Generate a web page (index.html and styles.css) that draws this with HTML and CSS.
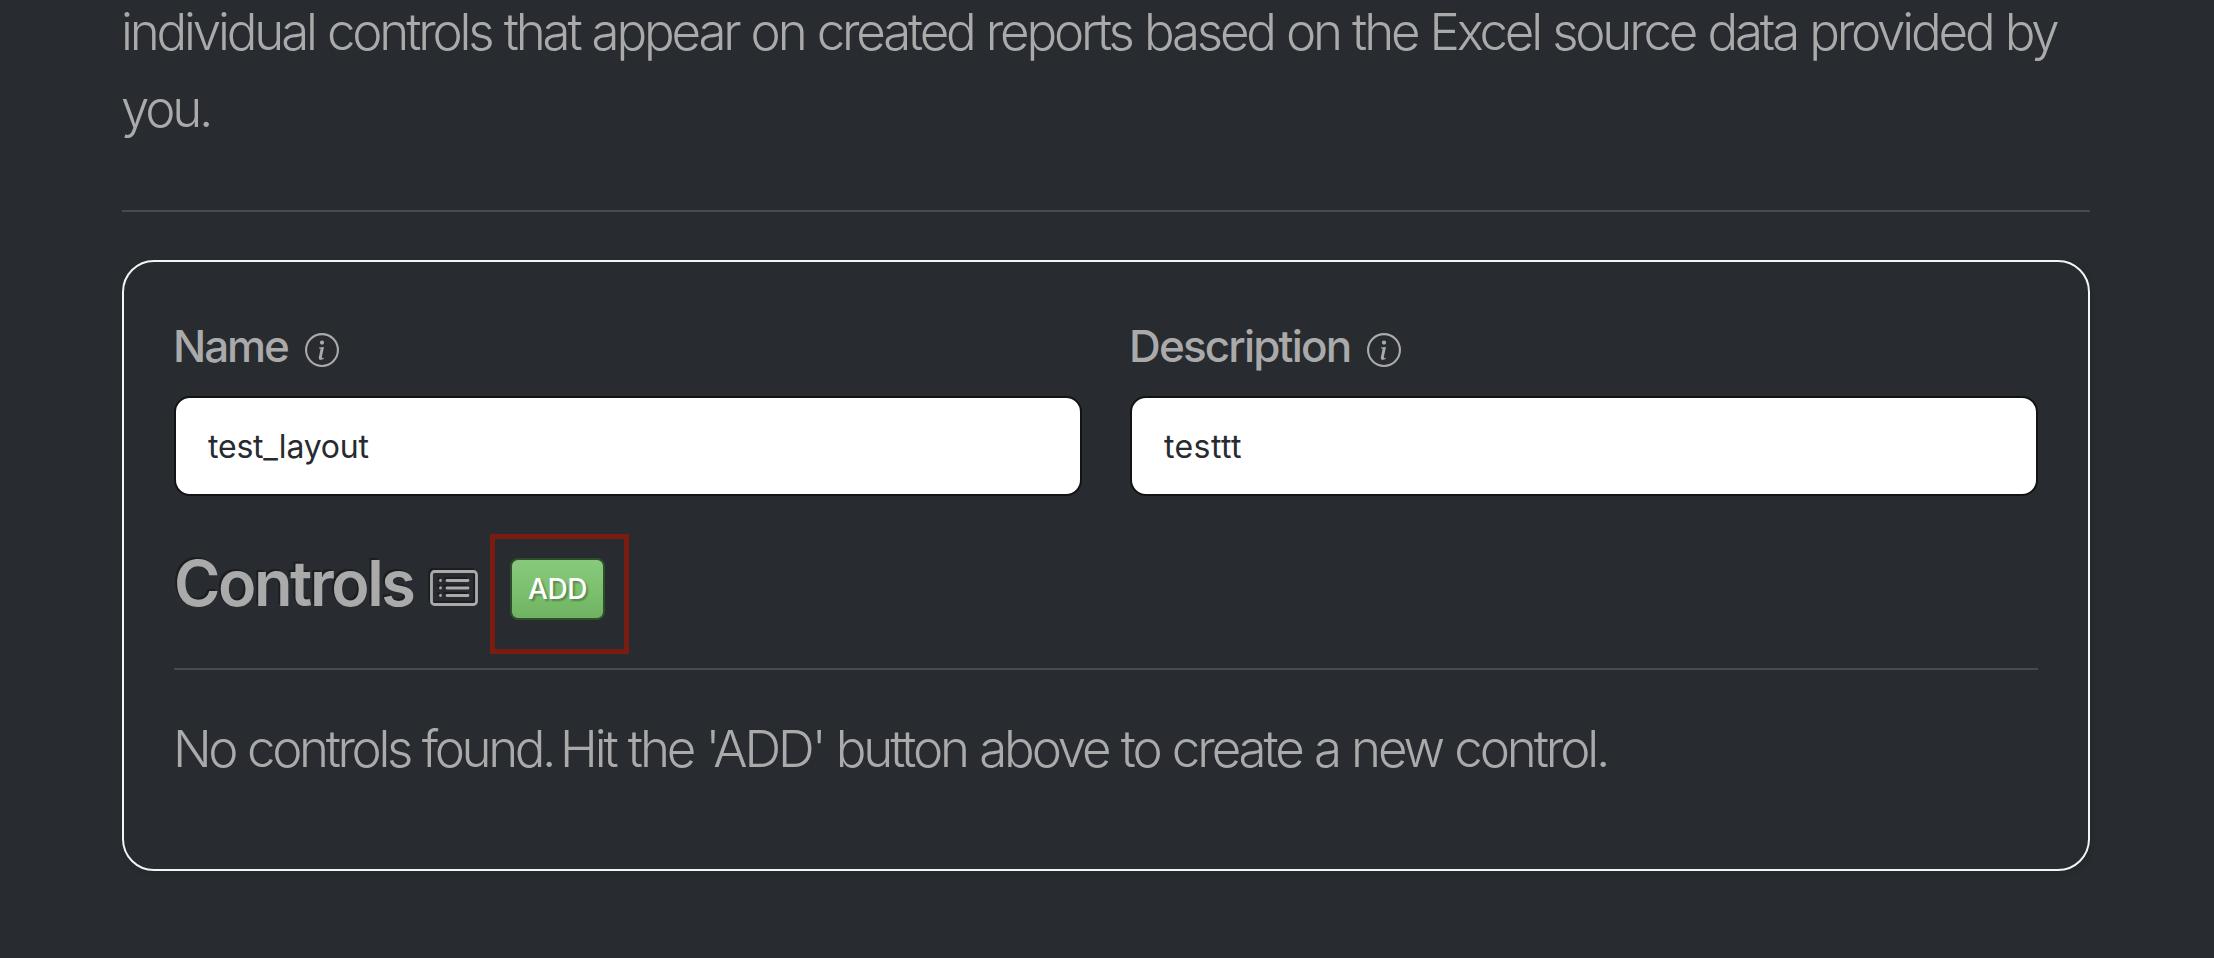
FILE: index.html
```html
<!DOCTYPE html>
<html lang="en">
<head>
<meta charset="utf-8">
<title>Layout</title>
<link rel="stylesheet" href="styles.css">
</head>
<body>
<main class="page">
  <p class="lead intro"><span class="line">individual controls that appear on created reports based on the Excel source data provided by</span> <span class="line">you.</span></p>
  <hr class="rule">
  <section class="card">
    <div class="fields">
      <div class="field">
        <label class="label" for="name"><span class="name-text">Name</span>
          <svg class="info" viewBox="0 0 16 16" fill="currentColor"><path d="M8 15A7 7 0 1 1 8 1a7 7 0 0 1 0 14zm0 1A8 8 0 1 0 8 0a8 8 0 0 0 0 16z"/><path d="m8.930 6.588-2.290.287-.082.380.450.083c.294.070.352.176.288.469l-.738 3.468c-.194.897.105 1.319.808 1.319.545 0 1.178-.252 1.465-.598l.088-.416c-.200.176-.492.246-.686.246-.275 0-.375-.193-.304-.533L8.930 6.588zM9 4.500a1 1 0 1 1-2 0 1 1 0 0 1 2 0z"/></svg>
        </label>
        <input class="input" id="name" type="text" value="test_layout">
      </div>
      <div class="field">
        <label class="label" for="description"><span class="desc-text">Description</span>
          <svg class="info" viewBox="0 0 16 16" fill="currentColor"><path d="M8 15A7 7 0 1 1 8 1a7 7 0 0 1 0 14zm0 1A8 8 0 1 0 8 0a8 8 0 0 0 0 16z"/><path d="m8.930 6.588-2.290.287-.082.380.450.083c.294.070.352.176.288.469l-.738 3.468c-.194.897.105 1.319.808 1.319.545 0 1.178-.252 1.465-.598l.088-.416c-.200.176-.492.246-.686.246-.275 0-.375-.193-.304-.533L8.930 6.588zM9 4.500a1 1 0 1 1-2 0 1 1 0 0 1 2 0z"/></svg>
        </label>
        <input class="input description" id="description" type="text" value="testtt">
      </div>
    </div>
    <div class="controls">
      <h2 class="heading">Controls</h2>
      <svg class="list" viewBox="0 0 48 36" fill="none" stroke="currentColor"><rect x="1.500" y="1.500" width="45" height="33" rx="3"/><path stroke-linecap="round" d="M17 10.500h21M17 18h21M17 25.500h21M10.500 10.500h.010M10.500 18h.010M10.500 25.500h.010"/></svg>
      <div class="highlight"><button class="add" type="button">ADD</button></div>
    </div>
    <hr class="rule">
    <p class="lead empty"><span class="first">No controls <span class="tight">found. </span></span>Hit the 'ADD' button above to create a new control.</p>
  </section>
</main>
</body>
</html>
```
FILE: styles.css
```css
* { box-sizing: border-box; }
body {
  margin: 0;
  height: 958px;
  overflow: hidden;
  background: #282b30;
  color: #aaa;
  font-family: Inter, "Liberation Sans", sans-serif;
}
.page { padding: 0 124px 0 122px; }
.lead { margin: 0; font-size: 51px; font-weight: 300; line-height: 77px; white-space: nowrap; text-indent: -1px; }
.intro { margin-top: -7px; letter-spacing: -3.170px; word-spacing: 1px; }
.line { display: block; }
.rule { margin: 0; border: 0; height: 2px; background: #494b4e; }
.intro + .rule { margin-top: 63px; }
.card {
  height: 611px;
  margin-top: 48px;
  padding: 58px 50px 0;
  border: 2px solid #f2f5f5;
  border-radius: 32px;
  box-shadow: 2px 2px 6px rgba(0, 0, 0, .12);
}
.fields { display: grid; grid-template-columns: 1fr 1fr; gap: 48px; }
.label { display: flex; align-items: flex-start; height: 60px; margin-bottom: 16px; font-size: 44px; font-weight: 450; line-height: 52px; }
.name-text { width: 131px; letter-spacing: -2.100px; text-indent: -1px; }
.desc-text { width: 237px; letter-spacing: -1.850px; text-indent: -1px; }
.info { width: 34px; height: 34px; margin-top: 13px; }
.input {
  display: block;
  width: 100%;
  height: 100px;
  padding: 0 32px;
  border: 2px solid #111315;
  border-radius: 16px;
  background: #fff;
  color: #272b30;
  font: 32px Inter, sans-serif;
  letter-spacing: -.2px;
  outline: 0;
}
.description { letter-spacing: .4px; }
.controls { display: flex; align-items: flex-start; height: 134px; margin-top: 38px; }
.heading { width: 256px; margin: 11px 0 0; font-size: 63px; font-weight: 600; line-height: 76px; letter-spacing: -2.400px; text-shadow: -2px -2px 0 rgba(0, 0, 0, .3); }
.list { width: 48px; height: 36px; margin: 36px 0 0; stroke-width: 2.800; filter: drop-shadow(-2px -2px 0 rgba(0, 0, 0, .3)); }
.highlight { width: 139px; height: 120px; margin-left: 12px; border: 5px solid #7a1c0f; padding: 19px 0 0 15px; }
.add {
  display: block;
  width: 95px;
  height: 62px;
  padding: 0;
  border: 2px solid #2f4f2a;
  border-radius: 8px;
  background: linear-gradient(#88c97c, #7abf6c 60%, #6fb163);
  color: #fff;
  font: 450 28px Inter, sans-serif;
  letter-spacing: -.4px;
  text-shadow: 2px 2px 2px rgba(0, 0, 0, .3);
}
.empty { margin-top: 40px; letter-spacing: -3.100px; word-spacing: 1px; }
.first { letter-spacing: -3.400px; }
.tight { word-spacing: -4px; }
```
